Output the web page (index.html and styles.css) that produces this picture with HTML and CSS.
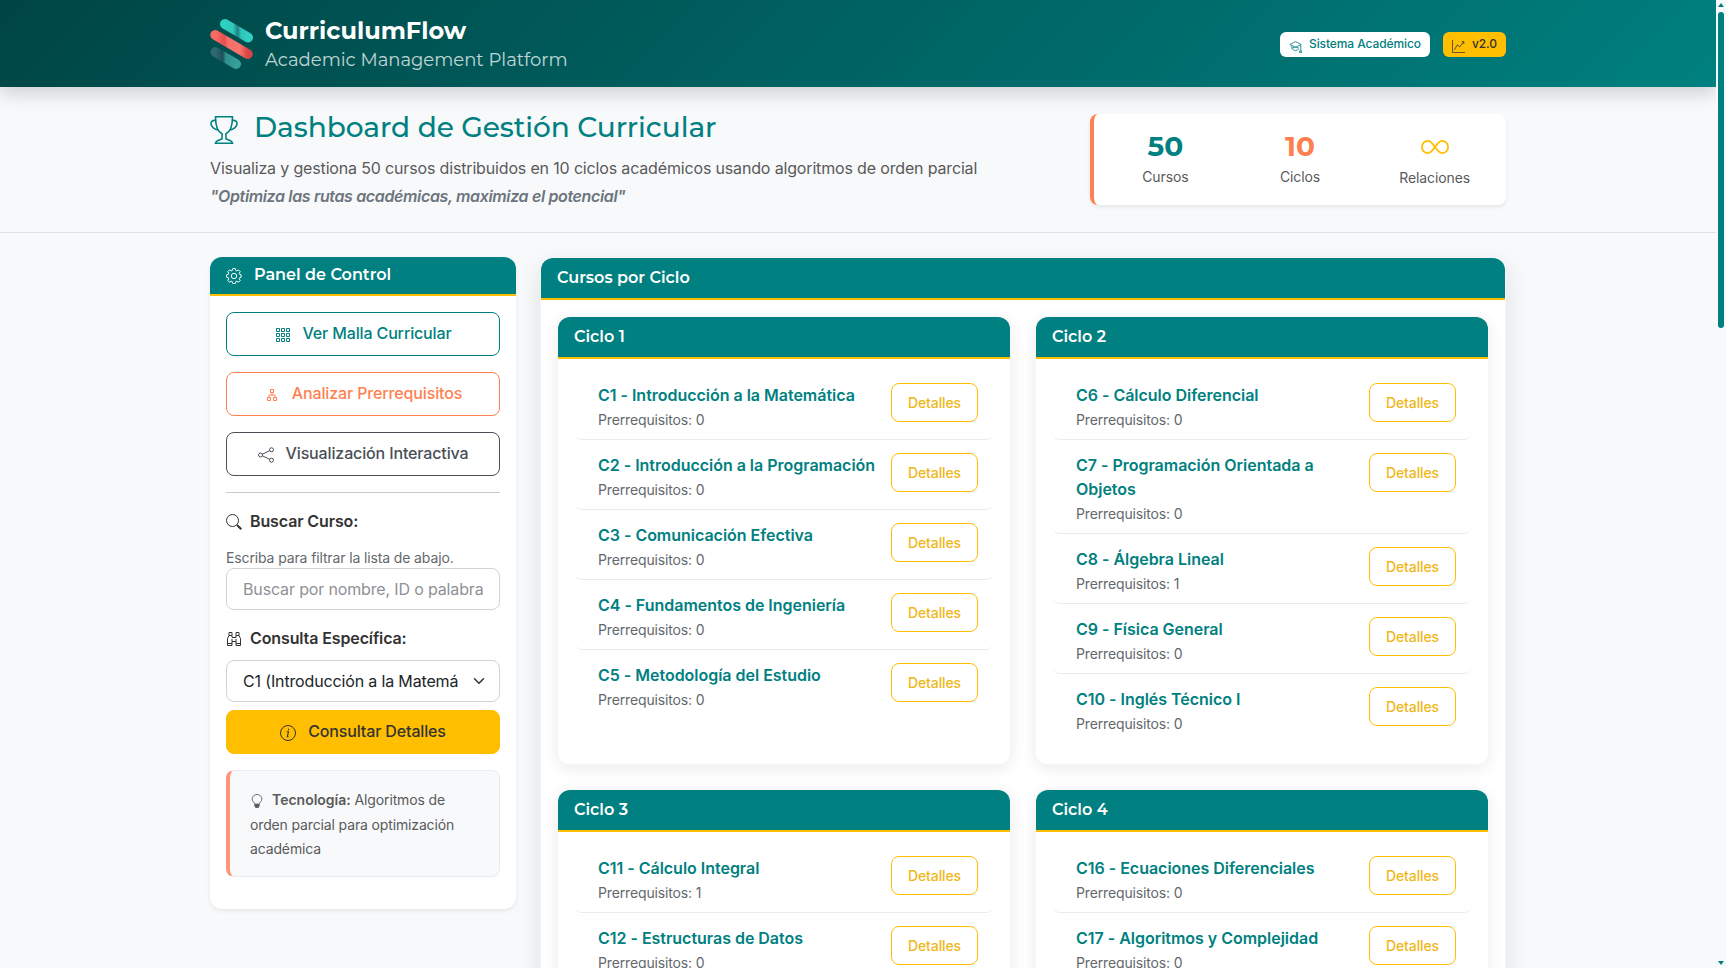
FILE: index.html
```html
<!DOCTYPE html>
<html lang="es">
<head>
<meta charset="utf-8">
<title>CurriculumFlow</title>
<link rel="stylesheet" href="styles.css">
</head>
<body>
<div class="page">
<header class="top">
  <div class="container top-row">
    <div class="brand">
      <svg class="logo" width="44" height="52" viewBox="0 0 44 52" fill="none" stroke-linecap="round" stroke-width="10">
        <defs>
          <linearGradient id="a" x1="0" x2="1"><stop offset="0" stop-color="#2fd0c2"/><stop offset=".35" stop-color="#2ec8bc"/><stop offset=".55" stop-color="#237f83"/><stop offset=".7" stop-color="#2fc4b9"/><stop offset="1" stop-color="#33cfc2"/></linearGradient>
          <linearGradient id="b" x1="0" x2="1"><stop offset="0" stop-color="#fb6a64"/><stop offset=".28" stop-color="#e2504f"/><stop offset=".4" stop-color="#f76f68"/><stop offset=".75" stop-color="#f8746c"/><stop offset="1" stop-color="#d94546"/></linearGradient>
          <linearGradient id="c" x1="0" x2="1"><stop offset="0" stop-color="#2d6a70"/><stop offset=".35" stop-color="#1c4f5a"/><stop offset=".5" stop-color="#2f8f8c"/><stop offset="1" stop-color="#359f99"/></linearGradient>
        </defs>
        <path d="M15 6 38 19.500" stroke="url(#a)"/>
        <path d="M5.300 17 37.700 36" stroke="url(#b)"/>
        <path d="M5.500 34 26 46" stroke="url(#c)"/>
      </svg>
      <div class="brand-text">
        <div class="brand-name">CurriculumFlow</div>
        <div class="brand-sub">Academic Management Platform</div>
      </div>
    </div>
    <div class="badges">
      <span class="badge badge-light">
        <svg width="13" height="13" viewBox="0 0 16 16" fill="none" stroke="currentColor"><path d="M8 2 15 5.500 8 9 1 5.500zM3.500 7v3.500Q8 15 12 11M4 10Q8 7 12 10M14.500 6v8M13 13.500h2.500v2H13z"/></svg>Sistema Académico</span>
      <span class="badge badge-gold">
        <svg width="13" height="13" viewBox="0 0 16 16" fill="none" stroke="currentColor"><path d="M.5 0v15.500H16M3 12l3.500-6 3 2.500L14.500 2M12 2h2.500v3"/></svg>v2.0</span>
    </div>
  </div>
</header>

<section class="hero">
  <div class="container hero-row">
    <div>
      <h1 class="hero-title"><svg width="28" height="28" viewBox="0 0 28 28" fill="none" stroke="currentColor" stroke-width="1.6"><path d="M5.500.8h17c0 9-2.500 15.200-6.500 17v5.200l4 1.600q2 .7 2.500 2.600h-17q.5-1.900 2.500-2.600l4-1.600v-5.200c-4-1.800-6.500-8-6.500-17zM5.500 4.500C-.5 3.500-1 11.500 7.500 14M22.500 4.500c6-1 6.500 7-2 9.500"/></svg><span>Dashboard de Gestión Curricular</span></h1>
      <p class="lead">Visualiza y gestiona 50 cursos distribuidos en 10 ciclos académicos usando algoritmos de orden parcial</p>
      <p class="quote">"Optimiza las rutas académicas, maximiza el potencial"</p>
    </div>
    <div class="stats">
      <div class="stat"><b class="teal">50</b><span>Cursos</span></div>
      <div class="stat"><b class="coral">10</b><span>Ciclos</span></div>
      <div class="stat"><svg class="inf" width="28" height="28" viewBox="0 0 28 28" fill="none" stroke="#ffbf00" stroke-width="1.8"><path d="M14 14C11.500 10.500 9.800 7.900 7 7.900a6.100 6.100 0 0 0 0 12.200c2.800 0 4.500-2.600 7-6.100s4.200-6.100 7-6.100a6.100 6.100 0 0 1 0 12.200c-2.800 0-4.500-2.600-7-6.100z"/></svg><span>Relaciones</span></div>
    </div>
  </div>
</section>

<main class="container main">
  <aside class="panel">
    <h2 class="panel-head"><svg width="16" height="16" viewBox="0 0 16 16" fill="none" stroke="currentColor"><circle cx="8" cy="8" r="2.700"/><path d="M6.700.6h2.600l.5 1.900 1 .4 1.700-1 1.700 1.700-1 1.700.4 1 1.500.5v2.500l-1.500.5-.4 1 1 1.700-1.700 1.700-1.700-1-1 .4-.5 1.900H6.700l-.5-1.900-1-.4-1.700 1-1.700-1.700 1-1.700-.4-1L.6 9.300V6.800l1.800-.5.4-1-1-1.700 1.700-1.700 1.700 1 1-.4z"/></svg><span>Panel de Control</span></h2>
    <div class="panel-body">
      <button class="btn btn-teal"><svg width="16" height="16" viewBox="0 0 16 16" fill="none" stroke="currentColor"><path d="M1.500 1.500h3v3h-3zM6.500 1.500h3v3h-3zM11.500 1.500h3v3h-3zM1.500 6.500h3v3h-3zM6.500 6.500h3v3h-3zM11.500 6.500h3v3h-3zM1.500 11.500h3v3h-3zM6.500 11.500h3v3h-3zM11.500 11.500h3v3h-3z"/></svg>Ver Malla Curricular</button>
      <button class="btn btn-coral"><svg width="16" height="16" viewBox="0 0 16 16" fill="none" stroke="currentColor"><path d="M6.500 2.500h3v3h-3zM3.500 10.500h3v3h-3zM9.500 10.500h3v3h-3zM8 5.500v2.500M5 10V8h6v2"/></svg>Analizar Prerrequisitos</button>
      <button class="btn btn-dark"><svg width="16" height="16" viewBox="0 0 16 16" fill="none" stroke="currentColor"><circle cx="2.500" cy="8" r="2"/><circle cx="13.500" cy="2.800" r="2"/><circle cx="13.500" cy="13.200" r="2"/><path d="m4.300 7.200 7.400-3.500M4.300 8.800l7.400 3.500"/></svg>Visualización Interactiva</button>
      <hr class="rule">
      <label class="label"><svg width="16" height="16" viewBox="0 0 16 16" fill="none" stroke="currentColor"><circle cx="6.500" cy="6.500" r="6"/><path d="m11 11 4.300 4.300" stroke-width="2"/></svg>Buscar Curso:</label>
      <small class="hint">Escriba para filtrar la lista de abajo.</small>
      <input class="field" placeholder="Buscar por nombre, ID o palabra clave">
      <label class="label label-2"><svg width="16" height="16" viewBox="0 0 16 16" fill="none" stroke="currentColor"><path d="M3 1.500h3v3H3zM10 1.500h3v3h-3zM3 4.500 1.500 7.500v7h4.500v-4h4v4h4.500v-7L13 4.500M6 4.500v2h4v-2M6 10.500V8M10 10.500V8M1.500 12.500H6M10 12.500h4.500"/></svg>Consulta Específica:</label>
      <div class="field select"><span>C1 (Introducción a la Matemática)</span><svg width="12" height="12" viewBox="0 0 12 12" fill="none" stroke="#343a40" stroke-width="1.600" stroke-linecap="round" stroke-linejoin="round"><path d="m1.500 3.800 4.500 4.500 4.500-4.500"/></svg></div>
      <button class="btn btn-gold"><svg width="16" height="16" viewBox="0 0 16 16" fill="none" stroke="currentColor"><circle cx="8" cy="8" r="7.500"/><path d="M6.700 6.800h1.800l-1.200 4.800h1.200M8.600 3.800v1.400" stroke-width="1.100"/></svg>Consultar Detalles</button>
      <div class="note"><svg width="14" height="14" viewBox="0 0 16 16" fill="none" stroke="currentColor"><path d="M5.500 11.500C5 9.500 2.500 8.500 2.500 5.800a5.500 5.300 0 0 1 11 0c0 2.700-2.500 3.700-3 5.700z"/><path d="M5.500 12h5v1.500l-1 2h-3l-1-2z" fill="currentColor"/></svg><b>Tecnología:</b> Algoritmos de orden parcial para optimización académica</div>
    </div>
  </aside>

  <section class="board">
    <h2 class="card-head">Cursos por Ciclo</h2>
    <div class="grid">
      <article class="card">
        <h3 class="card-head">Ciclo 1</h3>
        <ul class="list">
          <li class="item"><div class="info"><b>C1 - Introducción a la Matemática</b><span>Prerrequisitos: 0</span></div><button class="more">Detalles</button></li>
          <li class="item"><div class="info"><b>C2 - Introducción a la Programación</b><span>Prerrequisitos: 0</span></div><button class="more">Detalles</button></li>
          <li class="item"><div class="info"><b>C3 - Comunicación Efectiva</b><span>Prerrequisitos: 0</span></div><button class="more">Detalles</button></li>
          <li class="item"><div class="info"><b>C4 - Fundamentos de Ingeniería</b><span>Prerrequisitos: 0</span></div><button class="more">Detalles</button></li>
          <li class="item"><div class="info"><b>C5 - Metodología del Estudio</b><span>Prerrequisitos: 0</span></div><button class="more">Detalles</button></li>
        </ul>
      </article>
      <article class="card">
        <h3 class="card-head">Ciclo 2</h3>
        <ul class="list">
          <li class="item"><div class="info"><b>C6 - Cálculo Diferencial</b><span>Prerrequisitos: 0</span></div><button class="more">Detalles</button></li>
          <li class="item"><div class="info"><b>C7 - Programación Orientada a Objetos</b><span>Prerrequisitos: 0</span></div><button class="more">Detalles</button></li>
          <li class="item"><div class="info"><b>C8 - Álgebra Lineal</b><span>Prerrequisitos: 1</span></div><button class="more">Detalles</button></li>
          <li class="item"><div class="info"><b>C9 - Física General</b><span>Prerrequisitos: 0</span></div><button class="more">Detalles</button></li>
          <li class="item"><div class="info"><b>C10 - Inglés Técnico I</b><span>Prerrequisitos: 0</span></div><button class="more">Detalles</button></li>
        </ul>
      </article>
      <article class="card">
        <h3 class="card-head">Ciclo 3</h3>
        <ul class="list">
          <li class="item"><div class="info"><b>C11 - Cálculo Integral</b><span>Prerrequisitos: 1</span></div><button class="more">Detalles</button></li>
          <li class="item"><div class="info"><b>C12 - Estructuras de Datos</b><span>Prerrequisitos: 0</span></div><button class="more">Detalles</button></li>
        </ul>
      </article>
      <article class="card">
        <h3 class="card-head">Ciclo 4</h3>
        <ul class="list">
          <li class="item"><div class="info"><b>C16 - Ecuaciones Diferenciales</b><span>Prerrequisitos: 0</span></div><button class="more">Detalles</button></li>
          <li class="item"><div class="info"><b>C17 - Algoritmos y Complejidad</b><span>Prerrequisitos: 0</span></div><button class="more">Detalles</button></li>
        </ul>
      </article>
    </div>
  </section>
</main>
</div>
<div class="scrollbar"><i class="arrow"></i><i class="thumb"></i><i class="arrow arrow-down"></i></div>
</body>
</html>
```
FILE: styles.css
```css
* { box-sizing: border-box; }
body { margin: 0; height: 968px; overflow: hidden; display: flex; background: #f8f9fb; color: #333; font: 16px/24px Inter, sans-serif; }
h1, h2, h3, p, ul { margin: 0; padding: 0; }
button, input { font-family: inherit; }
.page { flex: 1; height: 968px; overflow: hidden; }
.container { width: 1296px; margin: 0 auto; }

.top { position: relative; height: 87px; background: linear-gradient(135deg, #004545, #008080); box-shadow: 0 8px 16px rgba(0,0,0,.15); }
.top-row { height: 87px; display: flex; justify-content: space-between; align-items: center; }
.brand { display: flex; align-items: center; gap: 11px; padding-top: 1px; color: #fff; font-family: Montserrat, Inter, sans-serif; }
.brand-text { padding-top: 2px; }
.brand-name { font-size: 24px; line-height: 30px; font-weight: 700; white-space: nowrap; }
.brand-sub { font-size: 18px; line-height: 28px; opacity: .75; white-space: nowrap; }
.badges { display: flex; gap: 13px; padding-top: 2px; }
.badge { display: flex; align-items: center; height: 25px; padding: 0 9px 1px; border-radius: 6px; font-size: 12px; font-weight: 500; gap: 7px; letter-spacing: -.09px; white-space: nowrap; }
.badge svg { position: relative; top: 2px; }
.badge-light { background: #fff; color: #008080; }
.badge-gold { background: #ffbf00; color: #333; }

.hero { height: 146px; padding-top: 23px; border-bottom: 1px solid #dee2e6; }
.hero-row { display: flex; justify-content: space-between; }
.hero-title { display: flex; align-items: center; gap: 16px; height: 34px; color: #008080; font: 500 28px/34px Montserrat, Inter, sans-serif; letter-spacing: -.06px; }
.hero-title svg { margin-top: 6px; }
.lead { margin-top: 10px; color: #5a5a5a; line-height: 28px; letter-spacing: -.16px; }
.quote { color: #6c757d; font-style: italic; font-weight: 600; line-height: 28px; letter-spacing: -.36px; }
.stats { display: flex; width: 416px; height: 91px; margin-top: 4px; padding: 13px 4px 0; background: #fff; border-left: 4px solid #ff7f50; border-radius: 8px; box-shadow: 0 2px 4px rgba(0,0,0,.075); }
.stat { flex: 1; display: flex; flex-direction: column; align-items: center; font-size: 14px; color: #5a5a5a; letter-spacing: -.1px; }
.stat b { height: 38px; font: 700 28px/38px Montserrat, Inter, sans-serif; letter-spacing: 0; }
.stat .inf { margin: 6px 0 5px; }
.stat b.teal { color: #008080; }
.stat b.coral { color: #ff7f50; }

.main { display: grid; grid-template-columns: 306px 966px; gap: 24px; padding-top: 24px; align-items: start; }
.panel { height: 652px; background: #fff; border-radius: 12px; overflow: hidden; box-shadow: 0 2px 4px rgba(0,0,0,.075); }
.panel-head { display: flex; align-items: center; gap: 12px; height: 39px; padding: 0 16px 2px; border-bottom: 2px solid #ffbf00; background: #008080; color: #fff; font: 600 16px/24px Montserrat, Inter, sans-serif; }
.panel-head svg { position: relative; top: 1px; }
.panel-body { display: flex; flex-direction: column; padding: 16px; }
.btn { display: flex; align-items: center; justify-content: center; gap: 12px; height: 44px; margin-bottom: 16px; padding: 0 0 3px; border: 1px solid; border-radius: 8px; background: #fff; font-size: 16px; font-weight: 500; letter-spacing: -.14px; }
.btn svg { position: relative; top: 2px; }
.btn-teal { color: #008080; }
.btn-coral { color: #ff7f50; }
.btn-dark { color: #495057; }
.btn-gold { margin-top: 8px; background: #ffbf00; border-color: #ffbf00; color: #333; }
.rule { width: 100%; margin: 0; border: 0; border-top: 1px solid #c9cacc; }
.label { display: flex; align-items: center; gap: 8px; height: 24px; margin-top: 16px; font-weight: 600; letter-spacing: -.12px; }
.label svg { position: relative; top: 1px; }
.hint { margin-top: 14px; height: 21px; font-size: 14px; line-height: 22px; color: #63686d; letter-spacing: -.13px; }
.field { height: 42px; padding: 0 16px; border: 1px solid #ced4da; border-radius: 8px; background: #fff; font-size: 16px; color: #212529; letter-spacing: -.15px; }
.field::placeholder { color: #8e9195; }
.label-2 { margin: 16px 0 10px; }
.select { display: flex; align-items: center; justify-content: space-between; gap: 15px; padding-right: 14px; }
.select span { flex: 1; overflow: hidden; white-space: nowrap; }
.note { height: 107px; padding: 17px 23px 0 20px; border: 1px solid #e9ecef; border-left: 4px solid #ff957a; border-radius: 8px; background: #f8f9fb; font-size: 14px; line-height: 24.500px; letter-spacing: -.14px; color: #5a5a5a; }
.note b { font-weight: 600; letter-spacing: 0; }
.note svg { margin-right: 8px; vertical-align: -3px; }

.board { height: 760px; border: 1px solid rgba(0,0,0,.04); background: #fff; border-radius: 12px 12px 0 0; box-shadow: 0 8px 24px rgba(0,0,0,.1); }
.card-head { height: 42px; padding: 8px 16px; border-bottom: 2px solid #ffbf00; border-radius: 12px 12px 0 0; background: #008080; color: #fff; font: 600 16px/24px Montserrat, Inter, sans-serif; }
.grid { display: grid; grid-template-columns: 454px 454px; grid-template-rows: 449px 449px; column-gap: 24px; row-gap: 24px; padding: 16px; }
.card { border: 1px solid rgba(0,0,0,.03); border-radius: 12px; background: #fff; box-shadow: 0 4px 16px rgba(0,0,0,.08); }
.list { list-style: none; padding: 11px 16px; }
.item { display: flex; justify-content: space-between; align-items: flex-start; min-height: 70px; padding: 13px 16px 7px 24px; border-bottom: 1px solid #e9ecef; border-radius: 8px; }
.item:last-child { border-bottom: 0; }
.info { display: flex; flex-direction: column; padding-right: 14px; }
.info b { font-weight: 600; color: #008080; letter-spacing: -.02px; }
.info span { font-size: 14px; line-height: 25px; color: #63686d; letter-spacing: -.14px; }
.more { flex: none; width: 87px; height: 39px; border: 1px solid #ffbf00; border-radius: 8px; background: #fff; color: #efb719; font-size: 14px; font-weight: 500; letter-spacing: -.12px; }

.scrollbar { display: flex; flex-direction: column; align-items: center; width: 10px; padding: 3px 0; background: #f8f9fb; }
.arrow { border: 3px solid transparent; border-top: 0; border-bottom: 4px solid #008080; }
.arrow-down { margin-top: auto; transform: rotate(180deg); }
.thumb { width: 6px; height: 316px; margin-top: 5px; border-radius: 3px; background: #008080; }
```
